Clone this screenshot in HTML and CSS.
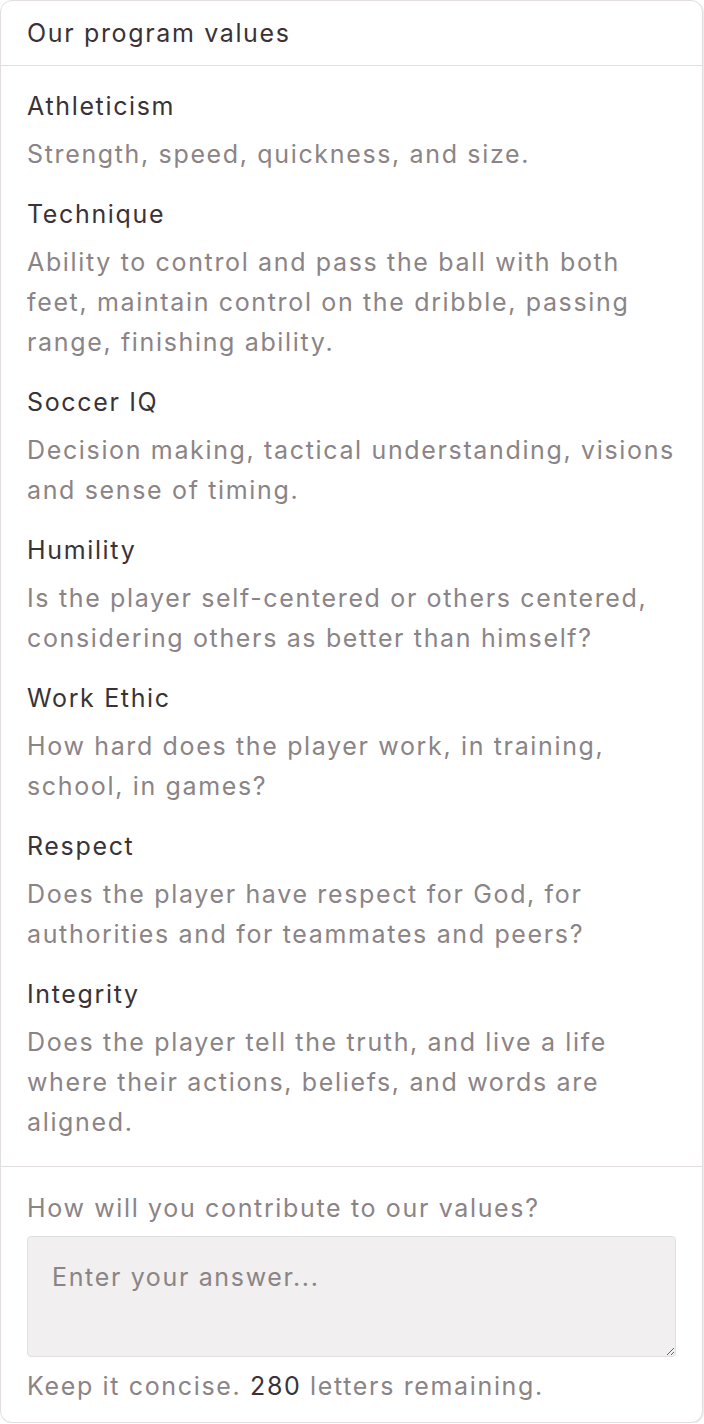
FILE: index.html
```html
<!DOCTYPE html>
<html>
<head>
<meta charset="utf-8">
<link rel="stylesheet" href="styles.css">
</head>
<body>
<div class="card">
  <div class="card-header">Our program values</div>
  <div class="card-body">
    <div class="value">
      <div class="value-title">Athleticism</div>
      <div class="value-desc">Strength, speed, quickness, and size.</div>
    </div>
    <div class="value">
      <div class="value-title">Technique</div>
      <div class="value-desc">Ability to control and pass the ball with both feet, maintain control on the dribble, passing range, finishing ability.</div>
    </div>
    <div class="value">
      <div class="value-title">Soccer IQ</div>
      <div class="value-desc">Decision making, tactical understanding, visions and sense of timing.</div>
    </div>
    <div class="value">
      <div class="value-title">Humility</div>
      <div class="value-desc">Is the player self-centered or others centered, considering others as better than himself?</div>
    </div>
    <div class="value">
      <div class="value-title">Work Ethic</div>
      <div class="value-desc">How hard does the player work, in training, school, in games?</div>
    </div>
    <div class="value">
      <div class="value-title">Respect</div>
      <div class="value-desc">Does the player have respect for God, for authorities and for teammates and peers?</div>
    </div>
    <div class="value">
      <div class="value-title">Integrity</div>
      <div class="value-desc">Does the player tell the truth, and live a life where their actions, beliefs, and words are aligned.</div>
    </div>
  </div>
  <div class="card-footer">
    <label class="question" for="answer">How will you contribute to our values?</label>
    <textarea id="answer" class="answer" placeholder="Enter your answer..."></textarea>
    <div class="hint">Keep it concise. <span class="count">280</span> letters remaining.</div>
  </div>
</div>
</body>
</html>
```
FILE: styles.css
```css
* { box-sizing: border-box; }
html, body { margin: 0; padding: 0; background: #ffffff; }
body {
  font-family: Inter, "Noto Sans", "Liberation Sans", sans-serif;
  font-size: 25px;
  line-height: 40px;
  letter-spacing: 1.65px;
  color: #3a3336;
}
.card {
  width: 703px;
  height: 1423px;
  border: 1px solid #e2dede;
  border-radius: 12px;
  box-shadow: 1px 1px 1px rgba(0,0,0,0.08);
  background: #fff;
  overflow: hidden;
}
.card-header {
  padding: 12px 26px;
  border-bottom: 1px solid #e2dede;
  color: #3a3336;
}
.card-body {
  padding: 20px 26px 24px;
  display: flex;
  flex-direction: column;
  gap: 20px;
  border-bottom: 1px solid #e2dede;
}
.value { display: flex; flex-direction: column; gap: 8px; }
.value-title { color: #3a3336; }
.value-desc { color: #8b8486; }
.card-footer {
  padding: 21px 26px 16px;
  display: flex;
  flex-direction: column;
}
.question { color: #8b8486; }
.answer {
  margin-top: 8px;
  height: 121px;
  width: 100%;
  background: #f1eff0;
  border: 1px solid #e2dfe0;
  border-radius: 4px;
  font: inherit;
  letter-spacing: inherit;
  padding: 20px 24px;
  color: #3a3336;
  resize: vertical;
}
.answer::placeholder { color: #8b8486; opacity: 1; }
.hint { margin-top: 9px; color: #8b8486; }
.count { color: #3a3336; }
```
